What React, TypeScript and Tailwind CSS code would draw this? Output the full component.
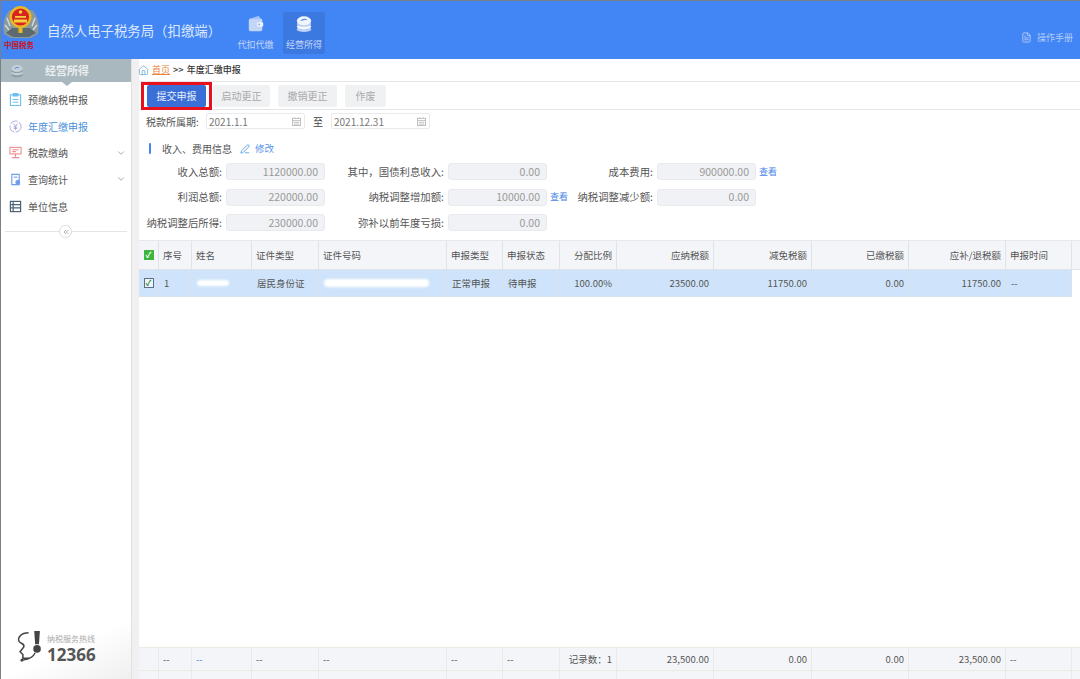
import { ChevronDown, ChevronsLeft, FileText, Home, PenLine } from "lucide-react";

const font = { fontFamily: '"Noto Sans CJK SC", "Noto Sans", sans-serif' };
const cols = "grid grid-cols-[20px_33px_60px_67px_128px_56px_57px_57px_97px_98px_97px_97px_66px_8px]";

const headers: Array<[string, boolean?]> = [
    ["序号"],
    ["姓名"],
    ["证件类型"],
    ["证件号码"],
    ["申报类型"],
    ["申报状态"],
    ["分配比例", true],
    ["应纳税额", true],
    ["减免税额", true],
    ["已缴税额", true],
    ["应补/退税额", true],
    ["申报时间"],
];

function Emblem() {
    return (
        <svg viewBox="0 0 44 36" className="h-[36px] w-[44px]">
            <path d="M3 30 C1 20 4 10 9 6 L31 6 C36 10 39 20 37 30 L30 34 L10 34 Z" fill="#8b999d" />
            <path d="M5 29 L11 24 L29 24 L35 29 L28 33 L12 33 Z" fill="#5d6b70" />
            <path d="M6 14 L9 22 M34 14 L31 22 M4 21 L8 26 M36 21 L32 26" stroke="#d5dcde" strokeWidth="1.4" />
            <circle cx="19.5" cy="13" r="11" fill="#e8b923" />
            <circle cx="19.5" cy="13" r="8.6" fill="#d9231f" />
            <rect x="14" y="12" width="11" height="1.8" fill="#f4d03f" />
            <rect x="13" y="15.5" width="13" height="3" fill="#f4d03f" />
            <circle cx="19.5" cy="8" r="1.8" fill="#f4d03f" />
            <path d="M17.5 24 h4 v5 h-4 z" fill="#e8b923" />
        </svg>
    );
}

function Wallet() {
    return (
        <svg viewBox="0 0 20 20" className="h-[18px] w-[18px]">
            <path d="M3 4 L13 1 L15 4 Z" fill="#a9c5f6" />
            <rect x="2" y="4" width="15" height="14" rx="2" fill="#c3d6f8" />
            <rect x="11" y="8" width="7" height="5" rx="1.5" fill="#eef3fd" />
            <circle cx="13.5" cy="10.5" r="1" fill="#7ea6ef" />
        </svg>
    );
}

function Coins({ gray }: { gray?: boolean }) {
    const a = gray ? "#c6d0d4" : "#f1f5fd";
    const b = gray ? "#8f9ea5" : "#b9cff6";
    return (
        <svg viewBox="0 0 20 20" className={gray ? "h-[14px] w-[14px]" : "h-[18px] w-[18px]"}>
            <ellipse cx="10" cy="16" rx="8" ry="3" fill={b} />
            <ellipse cx="10" cy="13" rx="8" ry="3" fill={a} />
            <ellipse cx="10" cy="10" rx="8" ry="3" fill={b} />
            <ellipse cx="10" cy="6.5" rx="8" ry="5" fill={a} />
            <path d="M6 7 C8 3 13 4 14 6 C11 5 9 6 6 7 Z" fill="#5f8fe8" />
        </svg>
    );
}

function Field({ label, value, link, w }: { label: string; value: string; link?: boolean; w: string }) {
    return (
        <div className={`flex items-center ${w}`}>
            <span className="flex-1 whitespace-nowrap pr-[4px] text-right text-[10.4px] text-[#555]">{label}</span>
            <div className="flex h-[17px] w-[99px] shrink-0 items-center justify-end rounded-[3px] border border-[#e9eaee] bg-[#f1f2f5] pr-[6px] text-[10.5px] text-[#999]">
                {value}
            </div>
            {link && <span className="ml-[3px] w-[19px] text-[9px] text-[#4a86e8]">查看</span>}
            {!link && <span className="ml-[3px] w-[19px]" />}
        </div>
    );
}

function Menu({ label, icon, active, more }: { label: string; icon: React.ReactNode; active?: boolean; more?: boolean }) {
    return (
        <div className="flex h-[26.7px] items-center pl-[8px] pr-[5px]">
            <span className="flex w-[19px] justify-start">{icon}</span>
            <span className={`flex-1 text-[10px] ${active ? "text-[#4a8fd8]" : "text-[#555]"}`}>{label}</span>
            {more && <ChevronDown className="h-[10px] w-[10px] text-[#999]" />}
        </div>
    );
}

export default function App() {
    return (
        <div style={font} className="flex h-[679px] w-[1080px] flex-col overflow-hidden border-l border-t border-[#7b7f86] bg-white">
            <header className="flex h-[58px] shrink-0 items-center bg-[#4285f4]">
                <div className="flex h-full w-[46px] flex-col items-start pt-[3px]">
                    <Emblem />
                    <span className="ml-[3px] mt-[2px] whitespace-nowrap font-['Liberation_Serif','Noto_Sans_CJK_SC',serif] text-[7.5px] font-bold leading-none text-[#c8141c]">
                        中国税务
                    </span>
                </div>
                <h1 className="w-[185px] whitespace-nowrap text-[13.4px] text-[#dbe7fc]">自然人电子税务局（扣缴端）</h1>
                <div className="mt-[6px] flex h-[42px] w-[47px] flex-col items-center justify-center gap-[5px] pt-px text-[9px] text-[#c3d6f8]">
                    <Wallet />
                    代扣代缴
                </div>
                <div className="ml-[4px] mt-[6px] flex h-[42px] w-[42px] flex-col items-center justify-center gap-[5px] rounded-[3px] bg-[#3b78e0] pt-px text-[9px] text-[#c3d6f8]">
                    <Coins />
                    经营所得
                </div>
                <div className="ml-auto flex items-center gap-[5px] pr-[7px] pt-[15px] text-[9px] text-[#b5ccf8]">
                    <FileText className="h-[11px] w-[11px]" />
                    操作手册
                </div>
            </header>

            <div className="flex min-h-0 flex-1">
                <aside className="flex w-[131px] shrink-0 flex-col border-r border-[#dfe1e5]">
                    <div className="relative flex h-[23px] shrink-0 items-center bg-[#a9b7bf] pl-[9px]">
                        <Coins gray />
                        <span className="ml-[21px] text-[11px] font-bold text-[#e9eef0]">经营所得</span>
                        <span className="absolute left-[61px] top-[23px] h-0 w-0 border-x-[5px] border-t-[4px] border-x-transparent border-t-[#a9b7bf]" />
                    </div>
                    <div className="mt-[4px] flex flex-col">
                        <Menu
                            label="预缴纳税申报"
                            icon={
                                <svg viewBox="0 0 14 14" className="h-[13px] w-[13px]" fill="none" stroke="#6cc0ee" strokeWidth="1.2">
                                    <rect x="1.5" y="2" width="11" height="11.5" />
                                    <rect x="4.5" y="0.7" width="5" height="2.5" fill="#6cc0ee" />
                                    <path d="M4 7 h6 M4 10 h6" />
                                </svg>
                            }
                        />
                        <Menu
                            active
                            label="年度汇缴申报"
                            icon={
                                <svg viewBox="0 0 14 14" className="h-[13px] w-[13px]" fill="none" stroke="#a9a5dd" strokeWidth="1">
                                    <circle cx="7" cy="7" r="6" strokeDasharray="9 1.5" />
                                    <path d="M4.8 3.8 L7 7 L9.2 3.8 M7 7 V10.8 M5 7.5 H9 M5 9 H9" />
                                </svg>
                            }
                        />
                        <Menu
                            more
                            label="税款缴纳"
                            icon={
                                <svg viewBox="0 0 14 14" className="h-[13px] w-[13px]" fill="none" stroke="#ec8f8f" strokeWidth="1.2">
                                    <rect x="1" y="1.5" width="12" height="7" />
                                    <path d="M3.5 4 h7 M3.5 6 h4 M7 8.5 V12.5 M3 12.5 H11" />
                                </svg>
                            }
                        />
                        <Menu
                            more
                            label="查询统计"
                            icon={
                                <svg viewBox="0 0 14 14" className="h-[13px] w-[13px]" fill="none" stroke="#6f9ee8" strokeWidth="1.2">
                                    <path d="M3 1.5 H11 V12.5 H3 Z" />
                                    <circle cx="9.5" cy="10" r="2" fill="#6f9ee8" />
                                    <path d="M5 4.5 h4" />
                                </svg>
                            }
                        />
                        <Menu
                            label="单位信息"
                            icon={
                                <svg viewBox="0 0 14 14" className="h-[13px] w-[13px]" fill="none" stroke="#4d6478" strokeWidth="1.3">
                                    <rect x="1.5" y="1.5" width="11" height="11" />
                                    <path d="M1.5 5 H12.5 M1.5 8.5 H12.5 M4.5 1.5 V12.5" />
                                </svg>
                            }
                        />
                    </div>
                    <div className="relative mx-[4px] mt-[12px] h-px bg-[#e3e4e6]">
                        <span className="absolute left-[54px] top-[-6px] flex h-[13px] w-[13px] items-center justify-center rounded-full border border-[#ddd] bg-white">
                            <ChevronsLeft className="h-[8px] w-[8px] text-[#888]" />
                        </span>
                    </div>
                    <div className="mt-auto flex h-[60px] items-start bg-gradient-to-br from-white via-white to-[#efefef] pl-[15px] pt-[11px]">
                        <svg viewBox="0 0 28 36" className="h-[34px] w-[27px] shrink-0">
                            <path d="M13 3 C5 3 1 8 3 12 C5 15 9 14 8 18 L4 23 L7 26 L7 30 L14 30" fill="none" stroke="#444" strokeWidth="1.6" />
                            <path d="M19 1 h6 l-1 14 h-4 z" fill="#444" />
                            <circle cx="22" cy="20" r="4" fill="#444" />
                            <path d="M20 24 C18 29 13 31 7 32" fill="none" stroke="#444" strokeWidth="1.4" />
                            <circle cx="6" cy="32" r="1.5" fill="#444" />
                        </svg>
                        <div className="ml-[4px] mt-[3px] flex flex-col">
                            <span className="whitespace-nowrap text-[8px] leading-[12px] text-[#aaa]">纳税服务热线</span>
                            <span className="text-[17px] font-bold leading-[20px] text-[#555]" style={{ fontFamily: '"Noto Sans", sans-serif' }}>
                                12366
                            </span>
                        </div>
                    </div>
                </aside>

                <div className="w-[7px] shrink-0 bg-[#f0f0f1]" />

                <main className="flex min-w-0 flex-1 flex-col">
                    <div className="flex h-[23px] shrink-0 items-center border-b border-[#e5e6e8] text-[9px]">
                        <Home className="-ml-px h-[11px] w-[11px] text-[#7fb2d8]" />
                        <span className="ml-[3px] text-[#e9853a] underline">首页</span>
                        <span className="ml-[3px] font-bold text-[#555]">&gt;&gt;</span>
                        <span className="ml-[3px] font-medium text-[#333]">年度汇缴申报</span>
                    </div>

                    <div className="flex h-[28px] shrink-0 items-center border-b border-[#e5e6e8] pl-[2px] text-[10px] text-[#aaa]">
                        <div className="flex h-[28px] w-[71px] items-center justify-center border-[3px] border-[#e8101c]">
                            <button className="h-[22px] w-[59px] rounded-[2px] bg-[#3a6fd8] text-[10px] text-[#e8effb]">提交申报</button>
                        </div>
                        <button className="ml-[1px] h-[22px] w-[57px] rounded-[2px] bg-[#f0f1f3]">启动更正</button>
                        <button className="ml-[8px] h-[22px] w-[59px] rounded-[2px] bg-[#f0f1f3]">撤销更正</button>
                        <button className="ml-[8px] h-[22px] w-[41px] rounded-[2px] bg-[#f0f1f3]">作废</button>
                    </div>

                    <div className="flex h-[20px] shrink-0 items-center pl-[7px] pt-[2px] text-[10px] text-[#555]">
                        <span className="w-[60px] whitespace-nowrap">税款所属期:</span>
                        <div className="flex h-[16px] w-[99px] items-center justify-between rounded-[2px] border border-[#e9eaee] pl-[2px] pr-[3px] text-[#777]">
                            2021.1.1
                            <CalIcon />
                        </div>
                        <span className="mx-[8px] text-[#444]">至</span>
                        <div className="flex h-[16px] w-[99px] items-center justify-between rounded-[2px] border border-[#e9eaee] pl-[2px] pr-[3px] text-[#777]">
                            2021.12.31
                            <CalIcon />
                        </div>
                    </div>

                    <div className="flex h-[32px] shrink-0 items-center pl-[10px] pt-[5px] text-[10px]">
                        <span className="h-[11px] w-[2px] rounded-sm bg-[#4285f4]" />
                        <span className="ml-[11px] text-[#555]">收入、费用信息</span>
                        <PenLine className="ml-[8px] h-[10px] w-[10px] text-[#4a9be8]" />
                        <span className="ml-[5px] text-[9.5px] text-[#5a92e8]">修改</span>
                    </div>

                    <div className="grid shrink-0 grid-cols-[204px_205px_280px] gap-y-[8.5px] pt-px">
                        <Field w="w-[208px]" label="收入总额:" value="1120000.00" />
                        <Field w="w-[226px]" label="其中，国债利息收入:" value="0.00" />
                        <Field w="w-[230px]" label="成本费用:" value="900000.00" link />
                        <Field w="w-[208px]" label="利润总额:" value="220000.00" />
                        <Field w="w-[226px]" label="纳税调整增加额:" value="10000.00" link />
                        <Field w="w-[230px]" label="纳税调整减少额:" value="0.00" />
                        <Field w="w-[208px]" label="纳税调整后所得:" value="230000.00" />
                        <Field w="w-[226px]" label="弥补以前年度亏损:" value="0.00" />
                    </div>

                    <div className="mt-[9px] flex min-h-0 flex-1 flex-col border-t border-[#e6e8ec] text-[9.5px]">
                        <div className={`${cols} h-[29px] shrink-0 border-b border-[#e0e3e8] bg-[#f4f5f9] text-[#555]`}>
                            <div className="flex items-center justify-center border-r border-[#e0e3e8]">
                                <span className="flex h-[10px] w-[10px] items-center justify-center bg-[#3fb53f] text-[8px] font-bold leading-none text-white">✓</span>
                            </div>
                            {headers.map(([text, right], i) => (
                                <div key={i} className={`flex items-center border-r border-[#e0e3e8] px-[4px] whitespace-nowrap ${right ? "justify-end" : ""}`}>
                                    {text}
                                </div>
                            ))}
                            <div />
                        </div>

                        <div className={`${cols} h-[27px] shrink-0 text-[#555]`}>
                            <div className="flex items-center justify-center border-r border-b border-[#d9e2ec] bg-[#cfe4fa]">
                                <span className="flex h-[10px] w-[10px] items-center justify-center border border-[#5c6f86] bg-[#eef4fb] text-[8px] font-bold leading-none text-[#2d8f2d]">✓</span>
                            </div>
                            <Cell>1</Cell>
                            <Cell>
                                <span className="h-[6px] w-[32px] rounded-full bg-white blur-[1px]" />
                            </Cell>
                            <Cell>居民身份证</Cell>
                            <Cell>
                                <span className="h-[8px] w-[105px] rounded-full bg-white blur-[1px]" />
                            </Cell>
                            <Cell>正常申报</Cell>
                            <Cell>待申报</Cell>
                            <Cell right>100.00%</Cell>
                            <Cell right>23500.00</Cell>
                            <Cell right>11750.00</Cell>
                            <Cell right>0.00</Cell>
                            <Cell right>11750.00</Cell>
                            <Cell>--</Cell>
                        </div>

                        <div className="flex-1" />

                        <div className={`${cols} h-[24px] shrink-0 border-y border-[#ecebe3] bg-[#f4f5f9] text-[#555]`}>
                            <Foot />
                            <Foot>--</Foot>
                            <Foot><span className="text-[#4a86e8]">--</span></Foot>
                            <Foot>--</Foot>
                            <Foot>--</Foot>
                            <Foot>--</Foot>
                            <Foot>--</Foot>
                            <Foot right>记录数：1</Foot>
                            <Foot right>23,500.00</Foot>
                            <Foot right>0.00</Foot>
                            <Foot right>0.00</Foot>
                            <Foot right>23,500.00</Foot>
                            <Foot>--</Foot>
                        </div>
                        <div className={`${cols} h-[8px] shrink-0 bg-[#f4f5f9]`}>
                            {Array.from({ length: 13 }).map((_, i) => (
                                <div key={i} className="border-r border-[#ecebe3]" />
                            ))}
                        </div>
                    </div>
                </main>
            </div>
        </div>
    );
}

function CalIcon() {
    return (
        <svg viewBox="0 0 10 10" className="h-[9px] w-[9px]" fill="none" stroke="#bbb" strokeWidth="1">
            <rect x="0.5" y="1.5" width="9" height="8" />
            <path d="M0.5 4 H9.5 M3 0.5 V2 M7 0.5 V2 M2 6 h6 M2 8 h6" />
        </svg>
    );
}

function Cell({ children, right }: { children: React.ReactNode; right?: boolean }) {
    return (
        <div className={`flex items-center whitespace-nowrap border-r border-b border-[#d9e2ec] bg-[#cfe4fa] pl-[5px] pr-[4px] ${right ? "justify-end" : ""}`}>
            {children}
        </div>
    );
}

function Foot({ children, right }: { children?: React.ReactNode; right?: boolean }) {
    return (
        <div className={`flex items-center whitespace-nowrap border-r border-[#ecebe3] px-[4px] ${right ? "justify-end" : ""}`}>
            {children}
        </div>
    );
}
